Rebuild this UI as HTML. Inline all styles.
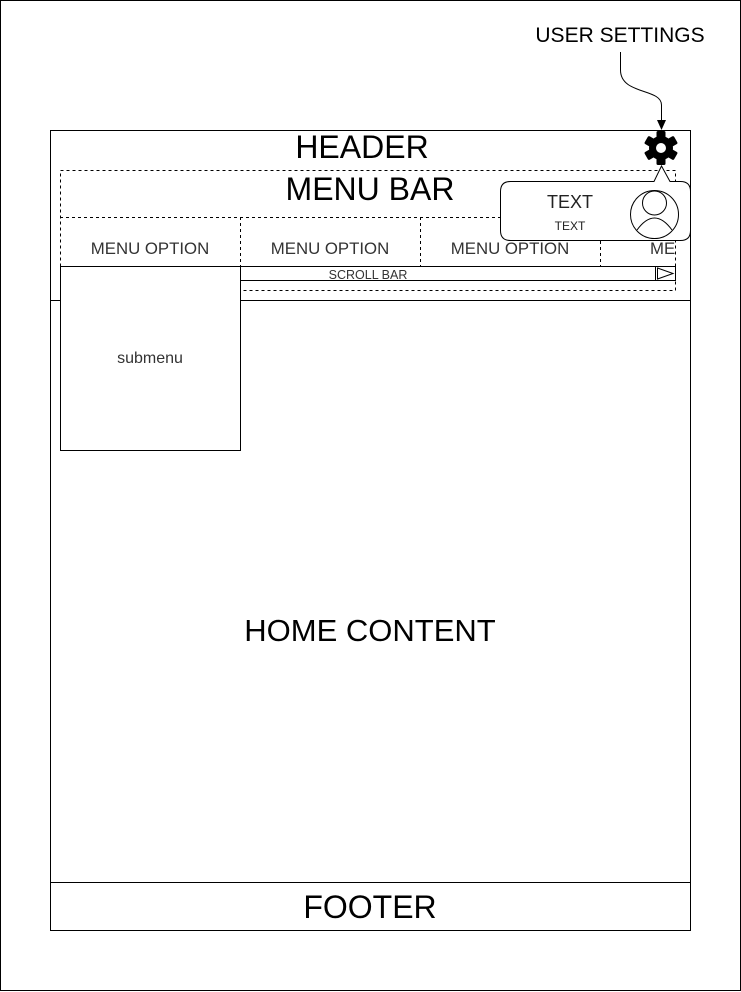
<!DOCTYPE html>
<html><head><meta charset="utf-8"><style>
html,body{margin:0;padding:0;background:#fff}
svg{display:block}
text{font-family:"Liberation Sans",sans-serif}
</style></head><body>
<svg width="741" height="992" viewBox="0 0 741 992" xmlns="http://www.w3.org/2000/svg">
<rect x="0.5" y="0.5" width="740" height="990" fill="#fff" stroke="#000"/>
<text x="620" y="42" font-size="21" text-anchor="middle" fill="#000">USER SETTINGS</text>
<path d="M620.5 52 L620.5 70 C620.5 95 661.5 88 661.5 105 L661.5 122" fill="none" stroke="#000" stroke-width="1"/>
<path d="M657 120 L661.5 130 L666 120 Z" fill="#000"/>
<rect x="50.5" y="130.5" width="640" height="800" fill="none" stroke="#000"/>
<line x1="50" y1="300.5" x2="690" y2="300.5" stroke="#000"/>
<line x1="50" y1="882.5" x2="690" y2="882.5" stroke="#000"/>
<text x="362" y="158" font-size="32" text-anchor="middle" fill="#000">HEADER</text>
<rect x="60.5" y="170.5" width="615" height="120" fill="none" stroke="#000" stroke-dasharray="3,3"/>
<text x="370" y="200" font-size="32" text-anchor="middle" fill="#000">MENU BAR</text>
<line x1="60" y1="217.5" x2="675" y2="217.5" stroke="#000" stroke-dasharray="3,3"/>
<line x1="240.5" y1="217" x2="240.5" y2="266" stroke="#000" stroke-dasharray="3,3"/>
<line x1="420.5" y1="217" x2="420.5" y2="266" stroke="#000" stroke-dasharray="3,3"/>
<line x1="600.5" y1="217" x2="600.5" y2="266" stroke="#000" stroke-dasharray="3,3"/>
<text x="150" y="254" font-size="16.8" text-anchor="middle" fill="#333">MENU OPTION</text>
<text x="330" y="254" font-size="16.8" text-anchor="middle" fill="#333">MENU OPTION</text>
<text x="510" y="254" font-size="16.8" text-anchor="middle" fill="#333">MENU OPTION</text>
<text x="650" y="254" font-size="16.8" fill="#333">ME</text>
<rect x="240.5" y="266.5" width="435" height="14" fill="#fff" stroke="#000"/>
<text x="368" y="279" font-size="12.5" text-anchor="middle" fill="#333">SCROLL BAR</text>
<line x1="655.5" y1="266" x2="655.5" y2="280" stroke="#000"/>
<path d="M657.5 268 L673 273.5 L657.5 279 Z" fill="none" stroke="#000"/>
<rect x="60.5" y="266.5" width="180" height="184" fill="#fff" stroke="#000"/>
<text x="150" y="363" font-size="16" text-anchor="middle" fill="#333">submenu</text>
<path d="M510.5 181.5 L654 181.5 L661.5 166 L670 181.5 L680.5 181.5 Q690.5 181.5 690.5 191.5 L690.5 230.5 Q690.5 240.5 680.5 240.5 L510.5 240.5 Q500.5 240.5 500.5 230.5 L500.5 191.5 Q500.5 181.5 510.5 181.5 Z" fill="#fff" stroke="#000"/>
<text x="570" y="208" font-size="18" text-anchor="middle" fill="#222">TEXT</text>
<text x="570" y="230" font-size="12" text-anchor="middle" fill="#222">TEXT</text>
<circle cx="654.5" cy="214.5" r="24" fill="none" stroke="#000"/>
<circle cx="654.5" cy="203" r="12" fill="none" stroke="#000"/>
<path d="M637 230 Q654.5 206 672 230" fill="none" stroke="#000"/>
<g transform="translate(661,148)" fill="#000">
<circle r="12"/>
<rect x="-4.5" y="-17" width="9" height="34" rx="1.5"/>
<rect x="-4.5" y="-17" width="9" height="34" rx="1.5" transform="rotate(60)"/>
<rect x="-4.5" y="-17" width="9" height="34" rx="1.5" transform="rotate(120)"/>
<circle r="5" fill="#fff"/>
</g>
<text x="370" y="641" font-size="31" text-anchor="middle" fill="#000">HOME CONTENT</text>
<text x="370" y="918" font-size="32" text-anchor="middle" fill="#000">FOOTER</text>
</svg>
</body></html>
